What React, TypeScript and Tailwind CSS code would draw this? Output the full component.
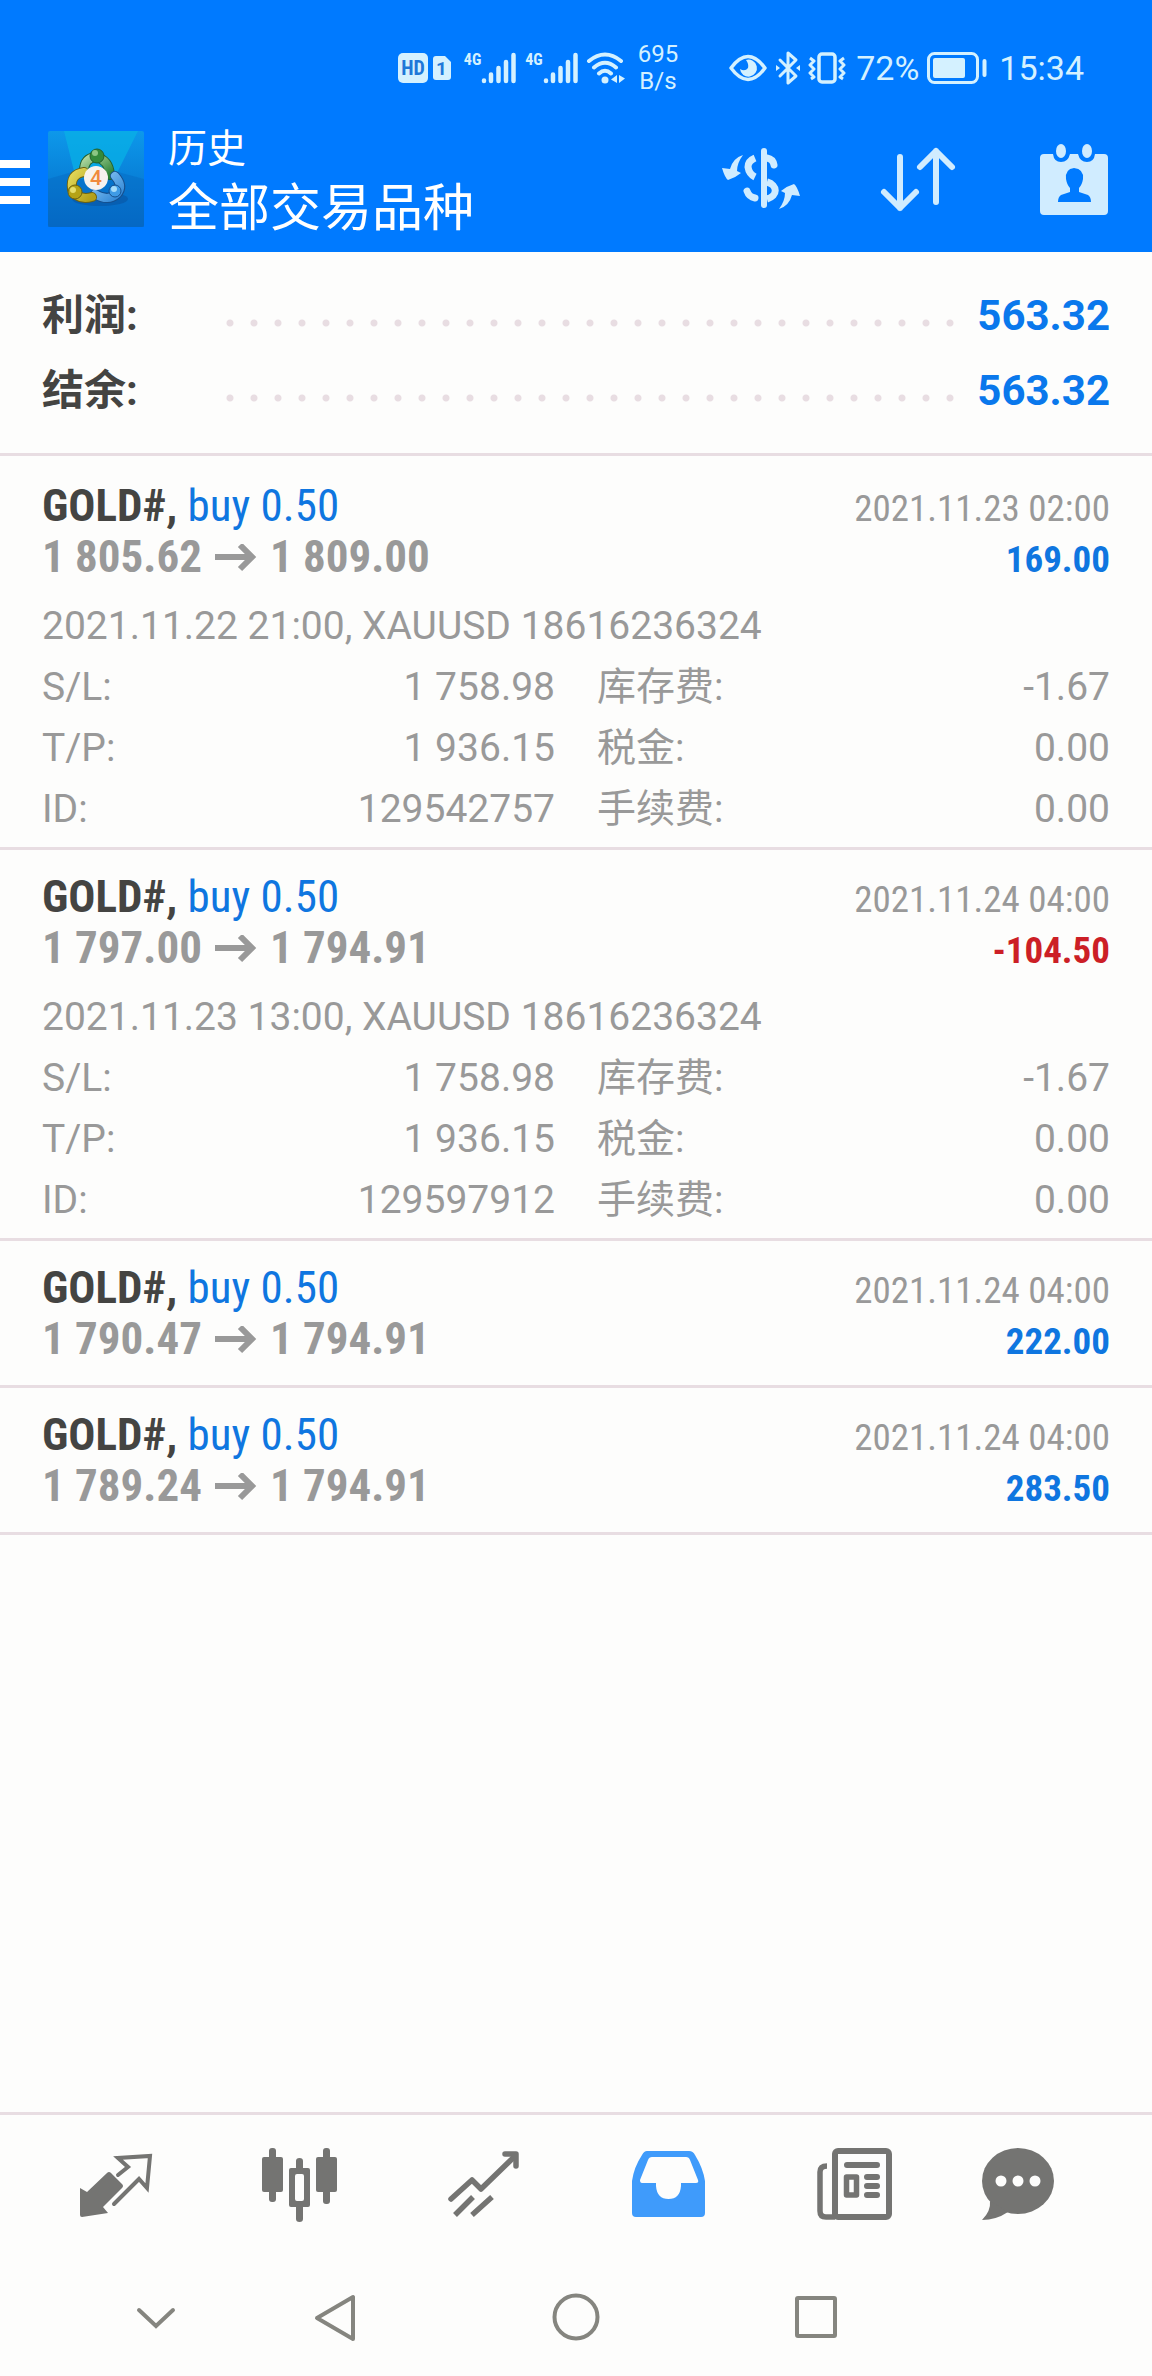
import React from 'react';

interface Deal {
  id: string;
  symbol: string;
  side: string;
  volume: string;
  open: string;
  close: string;
  closedAt: string;
  profit: string;
  details?: {
    comment: string;
    sl: string;
    tp: string;
    swap: string;
    tax: string;
    fee: string;
  };
}

const deals: Deal[] = [
  {
    id: '129542757',
    symbol: 'GOLD#',
    side: 'buy',
    volume: '0.50',
    open: '1 805.62',
    close: '1 809.00',
    closedAt: '2021.11.23 02:00',
    profit: '169.00',
    details: {
      comment: '2021.11.22 21:00, XAUUSD 18616236324',
      sl: '1 758.98',
      tp: '1 936.15',
      swap: '-1.67',
      tax: '0.00',
      fee: '0.00',
    },
  },
  {
    id: '129597912',
    symbol: 'GOLD#',
    side: 'buy',
    volume: '0.50',
    open: '1 797.00',
    close: '1 794.91',
    closedAt: '2021.11.24 04:00',
    profit: '-104.50',
    details: {
      comment: '2021.11.23 13:00, XAUUSD 18616236324',
      sl: '1 758.98',
      tp: '1 936.15',
      swap: '-1.67',
      tax: '0.00',
      fee: '0.00',
    },
  },
  {
    id: '3',
    symbol: 'GOLD#',
    side: 'buy',
    volume: '0.50',
    open: '1 790.47',
    close: '1 794.91',
    closedAt: '2021.11.24 04:00',
    profit: '222.00',
  },
  {
    id: '4',
    symbol: 'GOLD#',
    side: 'buy',
    volume: '0.50',
    open: '1 789.24',
    close: '1 794.91',
    closedAt: '2021.11.24 04:00',
    profit: '283.50',
  },
];

const SignalBars = () => (
  <div className="flex">
    <span className="font-['Roboto_Condensed',Roboto,sans-serif] text-base leading-4 font-bold">4G</span>
    <svg className="h-8 w-[35px]" viewBox="0 0 35 32" stroke="currentColor" strokeWidth="4.5" strokeLinecap="round">
      <path d="M3 28.500V29M10 22.500V29M17.500 16V29M25 10V29M32.500 3V29" />
    </svg>
  </div>
);

const StatusBar = () => (
  <div className="flex h-[106px] items-center justify-end pt-[30px] pr-[68px] text-[#d4f1ff]">
    <svg className="mr-3 h-8 w-[54px]" viewBox="0 0 54 32">
      <rect x="0" y="1" width="30" height="30" rx="5" fill="currentColor" />
      <text x="15" y="23" textAnchor="middle" fontSize="20" fontWeight="700" fontFamily="Roboto Condensed, Roboto, sans-serif" fill="#1f78d8">HD</text>
      <path d="M38 4H47L53 10V25Q53 28 50 28H38Q35 28 35 25V7Q35 4 38 4Z" fill="currentColor" />
      <text x="43.500" y="23" textAnchor="middle" fontSize="19" fontWeight="700" fontFamily="Roboto, sans-serif" fill="#1f78d8">1</text>
    </svg>
    <div className="mr-2 flex gap-[9px]">
      <SignalBars />
      <SignalBars />
    </div>
    <svg className="mr-3 h-8 w-10" viewBox="0 0 40 32" fill="none" stroke="currentColor" strokeWidth="4" strokeLinecap="round">
      <path d="M3 9Q19 -4 35 9M8 15.500Q19 6 30 15.500M13 21.500Q19 16 25 21.500" />
      <circle cx="19" cy="28" r="3.500" fill="currentColor" stroke="none" />
      <path d="M31 23V31L25 27.500ZM33 23L39 26.500L33 31Z" fill="currentColor" stroke="none" />
    </svg>
    <div className="mr-[50px] text-center text-2xl leading-[27px]">
      <div>695</div>
      <div>B/s</div>
    </div>
    <svg className="mr-2 h-8 w-10" viewBox="0 0 40 32" fill="none" stroke="currentColor" strokeWidth="3.500">
      <path d="M3 16Q20 -7 37 16Q20 39 3 16Z" strokeLinejoin="round" />
      <path d="M18 8A8.500 8.500 0 1 1 12 17Q17 20 20 16Q21 12 18 8Z" fill="currentColor" stroke="none" />
    </svg>
    <svg className="mr-2 h-9 w-6" viewBox="0 0 24 36" fill="none" stroke="currentColor" strokeWidth="3" strokeLinejoin="round" strokeLinecap="round">
      <path d="M4 10L20 26L12 33V3L20 10L4 26" />
      <path d="M0 15L4 18L0 21ZM24 15L20 18L24 21Z" fill="currentColor" stroke="none" />
    </svg>
    <svg className="mr-[10px] h-8 w-[38px]" viewBox="0 0 38 32" fill="none" stroke="currentColor" strokeWidth="3.500" strokeLinejoin="round">
      <rect x="11" y="2" width="16" height="28" rx="3" />
      <path d="M2 6L6 9L2 13L6 17L2 21L6 25L3 27M36 6L32 9L36 13L32 17L36 21L32 25L35 27" strokeWidth="3" />
    </svg>
    <span className="mr-2 text-[34px] leading-9">72%</span>
    <svg className="mr-3 h-8 w-[60px]" viewBox="0 0 60 32" fill="none" stroke="currentColor" strokeWidth="3">
      <rect x="1.500" y="1.500" width="49" height="29" rx="6" />
      <rect x="6" y="6" width="32" height="20" rx="2" fill="currentColor" stroke="none" />
      <path d="M57.500 9V23" strokeWidth="4" strokeLinecap="round" />
    </svg>
    <span className="text-[34px] leading-9">15:34</span>
  </div>
);

const AppLogo = () => (
  <svg className="size-24" viewBox="0 0 96 96">
    <defs>
      <linearGradient id="sky" x1="0" y1="0" x2="0" y2="1">
        <stop offset="0" stopColor="#0d98ea" />
        <stop offset="1" stopColor="#0468c6" />
      </linearGradient>
      <linearGradient id="green" x1="0" y1="0" x2="1" y2="1">
        <stop offset="0" stopColor="#b5dba4" />
        <stop offset="1" stopColor="#2b8236" />
      </linearGradient>
      <linearGradient id="yellow" x1="0" y1="0" x2="1" y2="1">
        <stop offset="0" stopColor="#e2d85a" />
        <stop offset="1" stopColor="#b39f18" />
      </linearGradient>
      <linearGradient id="blue" x1="0" y1="0" x2="1" y2="1">
        <stop offset="0" stopColor="#8cc8f5" />
        <stop offset="1" stopColor="#2f86d6" />
      </linearGradient>
    </defs>
    <rect width="96" height="96" rx="2" fill="url(#sky)" />
    <path d="M16 0H90L66 48H28Z" fill="#08b0e6" opacity="0.75" />
    <path d="M0 48L28 40L66 40L96 48V96H0Z" fill="#0668c0" opacity="0.45" />
    <ellipse cx="52" cy="68" rx="28" ry="7" fill="#08509c" opacity="0.5" />
    <g fill="none" strokeLinecap="round">
      <path d="M36 40Q36 27 48 26Q61 29 62 44" stroke="#24602d" strokeWidth="10" />
      <path d="M36 40Q36 27 48 26Q61 29 62 44" stroke="url(#green)" strokeWidth="8" />
      <path d="M67 45Q76 55 69 63Q60 71 47 63" stroke="#164f8d" strokeWidth="10" />
      <path d="M67 45Q76 55 69 63Q60 71 47 63" stroke="url(#blue)" strokeWidth="8" />
      <path d="M36 41Q22 43 24 58Q30 70 44 66" stroke="#6c6110" strokeWidth="10" />
      <path d="M36 41Q22 43 24 58Q30 70 44 66" stroke="url(#yellow)" strokeWidth="8" />
    </g>
    <circle cx="49" cy="25" r="7" fill="#348a3b" stroke="#24602d" />
    <circle cx="47" cy="22" r="3" fill="#8cc684" />
    <circle cx="27" cy="61" r="7" fill="#b5a316" stroke="#6c6110" />
    <circle cx="25" cy="59" r="3" fill="#e6de6c" />
    <circle cx="67" cy="60" r="6" fill="#3f9be6" stroke="#164f8d" />
    <circle cx="66" cy="58" r="3" fill="#a6dcfa" />
    <circle cx="48" cy="47" r="12" fill="#f7f2ee" />
    <text x="48" y="54" textAnchor="middle" fontSize="21" fontWeight="500" fontFamily="Roboto, sans-serif" fill="#f08a3c">4</text>
  </svg>
);

const Header = () => (
  <div className="flex h-[146px] items-center pr-[29px]">
    <button className="mt-[6px] mr-[18px]" aria-label="菜单">
      <svg className="h-11 w-[30px]" viewBox="0 0 30 44" fill="#fff">
        <path d="M0 0H30V8H0ZM0 18H30V26H0ZM0 36H30V44H0Z" />
      </svg>
    </button>
    <AppLogo />
    <div className="ml-6 flex-1 pt-[6px]">
      <h2 className="text-[39px] leading-[54px]">历史</h2>
      <h1 className="text-[51px] leading-[66px]">全部交易品种</h1>
    </div>
    <div className="flex gap-[61px] text-[#d0ecff]">
      <button aria-label="交易品种">
        <svg className="size-24" viewBox="0 0 96 96" fill="none" stroke="currentColor" strokeWidth="7">
          <path d="M51 20V74" strokeWidth="6" strokeLinecap="round" />
          <path d="M42 27Q35 30 35 36Q36 43 42 46" />
          <path d="M54 27Q60 28 61 34M34 60Q36 66 42 67" strokeLinecap="round" />
          <path d="M54 51C65 54 65 65 54 68" />
          <g fill="currentColor" stroke="none">
            <path d="M30 24Q20 27 17 38L9 37Q12 47 15 49Q22 47 28 42L24 40Q24 32 30 24Z" />
            <path d="M30 24Q20 27 17 38L9 37Q12 47 15 49Q22 47 28 42L24 40Q24 32 30 24Z" transform="rotate(180 48 51)" />
          </g>
        </svg>
      </button>
      <button aria-label="排序">
        <svg className="size-24" viewBox="0 0 96 96" fill="none" stroke="currentColor" strokeWidth="6" strokeLinecap="round" strokeLinejoin="round">
          <path d="M30 26V77M14 61L30 77L46 61M66 71V20M50 36L66 20L82 36" />
        </svg>
      </button>
      <button aria-label="时间范围">
        <svg className="size-24" viewBox="0 0 96 96" fill="currentColor">
          <path
            fillRule="evenodd"
            d="M17 23H26Q27 31 34 31Q41 31 43 23H51Q53 31 60 31Q67 31 68 23H77Q81 23 81 27V80Q81 84 77 84H17Q13 84 13 80V27Q13 23 17 23ZM47 37Q38 38 39 48Q40 54 43 57V61L34 64Q31 66 31 71H64Q64 66 61 64L52 61V57Q55 54 56 48Q57 38 47 37Z"
          />
          <ellipse cx="34" cy="20" rx="5" ry="7" />
          <ellipse cx="60" cy="20" rx="5" ry="7" />
        </svg>
      </button>
    </div>
  </div>
);

interface RowProps {
  label: string;
  value: string;
}

const SummaryRow: React.FC<RowProps> = ({ label, value }) => (
  <div className="flex items-center text-[42px] leading-[75px]">
    <dt className="w-44 font-bold text-[#444442]">{label}</dt>
    <dd className="flex flex-1 items-center font-bold text-[#0a78ec]">
      <span className="mt-[14px] mr-3 h-2 flex-1 bg-[radial-gradient(circle,#e8dde2_3px,transparent_4px)] bg-[length:24px_8px] bg-repeat-x" />
      {value}
    </dd>
  </div>
);

const DetailRow: React.FC<RowProps> = ({ label, value }) => (
  <div className="flex justify-between">
    <dt>{label}</dt>
    <dd>{value}</dd>
  </div>
);

const DealItem: React.FC<{ deal: Deal }> = ({ deal }) => (
  <li className="border-b-[3px] border-[#e8dde2] px-[42px] pt-[21px]">
    <div className="font-['Roboto_Condensed',Roboto,sans-serif] text-[45px] leading-[51px]">
      <div className="flex h-[51px] items-baseline justify-between">
        <p className="text-[#0f76e0]">
          <span className="font-bold text-[#444442]">{deal.symbol},</span> {deal.side} {deal.volume}
        </p>
        <time className="text-[37px] text-[#999]">{deal.closedAt}</time>
      </div>
      <div className="flex h-[51px] items-baseline justify-between font-bold">
        <p className="text-[#999]">
          {deal.open}
          <svg
            className="mx-[13px] inline-block h-7 w-[42px] align-baseline"
            viewBox="0 0 42 28"
            fill="none"
            stroke="currentColor"
            strokeWidth="6"
            role="img"
            aria-label="→"
          >
            <path d="M0 13H37M25 1L37 13L25 25" />
          </svg>
          {deal.close}
        </p>
        <p className={deal.profit.startsWith('-') ? 'text-[37px] text-[#cc1f26]' : 'text-[37px] text-[#0f76e0]'}>
          {deal.profit}
        </p>
      </div>
    </div>
    {deal.details ? (
      <div className="mt-[14px] pb-2 text-[39px] leading-[60px] text-[#999]">
        <p>{deal.details.comment}</p>
        <dl className="mt-px grid auto-rows-[60px] grid-cols-2 gap-x-[42px] gap-y-px">
          <DetailRow label="S/L:" value={deal.details.sl} />
          <DetailRow label="库存费:" value={deal.details.swap} />
          <DetailRow label="T/P:" value={deal.details.tp} />
          <DetailRow label="税金:" value={deal.details.tax} />
          <DetailRow label="ID:" value={deal.id} />
          <DetailRow label="手续费:" value={deal.details.fee} />
        </dl>
      </div>
    ) : (
      <div className="h-[21px]" />
    )}
  </li>
);

const TabBar = () => (
  <nav className="flex justify-between border-t-[3px] border-[#e8dde2] px-[60px] pt-[22px] pb-[25px] text-[#747472]">
    <button aria-label="行情">
      <svg className="h-24 w-28" viewBox="-8 0 112 96" fill="none" stroke="currentColor" strokeWidth="4">
        <path d="M12 51L19 55L39 36Q41 34 43 36L54 47Q56 49 54 51L35 70L40 76L14 80Q12 80 12 78Z" fill="currentColor" stroke="none" />
        <path d="M50 38L60 30L50 21L82 19L79 51L71 42L46 67" strokeLinecap="round" />
      </svg>
    </button>
    <button aria-label="图表">
      <svg className="h-24 w-28" viewBox="-8 0 112 96" fill="currentColor">
        <rect x="10" y="20" width="21" height="35" rx="2" />
        <rect x="17" y="11" width="7" height="54" rx="3" />
        <rect x="64" y="20" width="21" height="35" rx="2" />
        <rect x="71" y="11" width="7" height="56" rx="3" />
        <path d="M44 31V24Q44 21 47.500 21Q51 21 51 24V31H56Q58 31 58 33V68Q58 70 56 70H51V82Q51 85 47.500 85Q44 85 44 82V70H39Q37 70 37 68V33Q37 31 39 31ZM45 37Q43 37 43 39V62Q43 64 45 64H50Q52 64 52 62V39Q52 37 50 37Z" fillRule="evenodd" />
      </svg>
    </button>
    <button aria-label="交易">
      <svg className="h-24 w-28" viewBox="-8 0 112 96" fill="none" stroke="currentColor" strokeWidth="5.500">
        <path d="M15 62L36 43L45 52L79 19" strokeLinejoin="round" strokeLinecap="round" />
        <path d="M69 17H80V29" strokeLinecap="round" strokeLinejoin="round" />
        <path d="M37 60L19 78M56 60L36 78" />
      </svg>
    </button>
    <button aria-label="历史" aria-current="page" className="text-[#3f9bfb]">
      <svg className="h-24 w-28" viewBox="-8 0 112 96" fill="currentColor">
        <path
          fillRule="evenodd"
          d="M27 14H69Q73 14 75 18Q83 31 85 44V76Q85 80 81 80H16Q12 80 12 76V44Q14 30 22 18Q24 14 27 14ZM32 20Q29 20 28 23L20 43Q20 46 22 46H36V49Q37 62 48.500 62Q60 62 61 49V46H76Q79 46 78 43L70 23Q69 20 66 20Z"
        />
      </svg>
    </button>
    <button aria-label="新闻">
      <svg className="h-24 w-28" viewBox="-8 0 112 96" fill="none" stroke="currentColor" strokeWidth="6">
        <rect x="31" y="14" width="54" height="66" rx="3" />
        <path d="M23 29Q16 29 16 35V74Q16 80 22 80H31" strokeWidth="5.500" />
        <path d="M43 28H73M63 40H73M63 49H73M63 58H73" strokeLinecap="round" />
        <rect x="42.500" y="40" width="10" height="18" strokeWidth="5.500" strokeLinejoin="round" />
      </svg>
    </button>
    <button aria-label="聊天">
      <svg className="h-24 w-28" viewBox="-8 0 112 96" fill="currentColor">
        <ellipse cx="30" cy="44" rx="36" ry="33" />
        <path d="M2 64Q3 74 -6 83Q8 83 20 75Z" />
        <g fill="#fdfdfc">
          <circle cx="13" cy="44" r="5.500" />
          <circle cx="30" cy="44" r="5.500" />
          <circle cx="47" cy="44" r="5.500" />
        </g>
      </svg>
    </button>
  </nav>
);

const SystemNav = () => (
  <div className="grid h-[118px] grid-cols-[1fr_2fr_2fr_2fr] items-center justify-items-center pr-[216px] pl-24 text-[#85857f]">
    <button aria-label="收起">
      <svg className="size-12" viewBox="0 0 48 48" fill="none" stroke="currentColor" strokeWidth="4" strokeLinecap="round">
        <path d="M7 17L24 33L41 17" />
      </svg>
    </button>
    <button aria-label="返回">
      <svg className="size-12" viewBox="0 0 48 48" fill="none" stroke="currentColor" strokeWidth="4" strokeLinejoin="round">
        <path d="M5 25L41 4V46Z" />
      </svg>
    </button>
    <button aria-label="主页">
      <svg className="size-12" viewBox="0 0 48 48" fill="none" stroke="currentColor" strokeWidth="4">
        <circle cx="24" cy="24" r="21.500" />
      </svg>
    </button>
    <button aria-label="最近任务">
      <svg className="size-12" viewBox="0 0 48 48" fill="none" stroke="currentColor" strokeWidth="4">
        <rect x="5" y="5" width="38" height="38" rx="1" />
      </svg>
    </button>
  </div>
);

export default function App() {
  return (
    <div className="flex min-h-screen flex-col bg-[#fdfdfc] font-[Roboto,'Noto_Sans_CJK_SC',sans-serif]">
      <header className="bg-[#007aff] text-white">
        <StatusBar />
        <Header />
      </header>
      <main className="flex-1">
        <dl className="border-b-[3px] border-[#e8dde2] px-[42px] pt-[26px] pb-[25px]">
          <SummaryRow label="利润:" value="563.32" />
          <SummaryRow label="结余:" value="563.32" />
        </dl>
        <ul className="pt-[3px]">
          {deals.map((deal) => (
            <DealItem key={deal.id} deal={deal} />
          ))}
        </ul>
      </main>
      <TabBar />
      <SystemNav />
    </div>
  );
}
